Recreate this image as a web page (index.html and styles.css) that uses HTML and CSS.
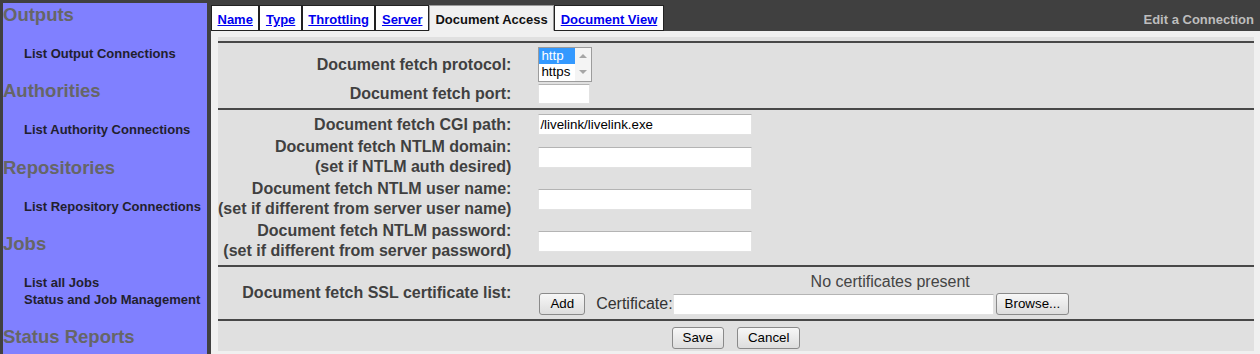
FILE: index.html
```html
<!DOCTYPE html>
<html lang="en">
<head>
<meta charset="utf-8">
<title>Edit a Connection</title>
<link rel="stylesheet" href="styles.css">
</head>
<body>
<div class="page">
  <nav class="nav">
    <div class="nav-section">
      <div class="nav-head">Outputs</div>
      <ul class="nav-links"><li><a href="#">List Output Connections</a></li></ul>
    </div>
    <div class="nav-section">
      <div class="nav-head">Authorities</div>
      <ul class="nav-links"><li><a href="#">List Authority Connections</a></li></ul>
    </div>
    <div class="nav-section">
      <div class="nav-head">Repositories</div>
      <ul class="nav-links"><li><a href="#">List Repository Connections</a></li></ul>
    </div>
    <div class="nav-section">
      <div class="nav-head">Jobs</div>
      <ul class="nav-links"><li><a href="#">List all Jobs</a></li><li><a href="#">Status and Job Management</a></li></ul>
    </div>
    <div class="nav-section">
      <div class="nav-head">Status Reports</div>
    </div>
  </nav>
  <main class="main">
    <div class="header">
      <div class="tabs">
        <a class="tab" href="#">Name</a>
        <a class="tab" href="#">Type</a>
        <a class="tab" href="#">Throttling</a>
        <a class="tab" href="#">Server</a>
        <span class="tab tab-active">Document Access</span>
        <a class="tab" href="#">Document View</a>
      </div>
      <div class="title">Edit a Connection</div>
    </div>
    <div class="content">
      <div class="panel">
        <div class="form">
          <div class="rule rule-first"></div>

          <div class="label">Document fetch protocol:</div>
          <div class="value">
            <div class="listbox">
              <div class="options">
                <div class="opt opt-sel">http</div>
                <div class="opt">https</div>
              </div>
              <div class="lb-scroll"><span class="arr arr-up"></span><span class="arr arr-down"></span></div>
            </div>
          </div>

          <div class="label">Document fetch port:</div>
          <div class="value"><span class="input input-port"></span></div>

          <div class="rule"></div>

          <div class="label">Document fetch CGI path:</div>
          <div class="value"><span class="input input-text">/livelink/livelink.exe</span></div>

          <div class="label">Document fetch NTLM domain:<br>(set if NTLM auth desired)</div>
          <div class="value"><span class="input input-text"></span></div>

          <div class="label">Document fetch NTLM user name:<br>(set if different from server user name)</div>
          <div class="value"><span class="input input-text"></span></div>

          <div class="label">Document fetch NTLM password:<br>(set if different from server password)</div>
          <div class="value"><span class="input input-text"></span></div>

          <div class="rule"></div>

          <div class="label">Document fetch SSL certificate list:</div>
          <div class="value value-ssl">
            <div class="nocerts">No certificates present</div>
            <div class="addrow">
              <span class="btn btn-add">Add</span>
              <span class="cert-label">Certificate:</span>
              <span class="input input-file"></span>
              <span class="btn btn-browse">Browse...</span>
            </div>
          </div>

          <div class="rule"></div>

          <div class="actions">
            <span class="btn">Save</span>
            <span class="btn">Cancel</span>
          </div>
        </div>
      </div>
    </div>
  </main>
</div>
</body>
</html>
```

FILE: styles.css
```css
* { box-sizing: border-box; }
html, body { margin: 0; padding: 0; }
body {
  background: #404040;
  font-family: "Liberation Sans", Arial, sans-serif;
  height: 354px;
  overflow: hidden;
}
.page {
  display: flex;
  gap: 4px;
  padding-left: 3px;
  min-height: 354px;
}

/* navigation */
.nav {
  width: 204px;
  flex: none;
  margin-top: 3px;
  background: #8080ff;
}
.nav-head {
  font-size: 18.5px;
  line-height: 23px;
  font-weight: bold;
  color: #666666;
}
.nav-links {
  list-style: none;
  margin: 19px 0 17.3px;
  padding: 0 0 0 21px;
}
.nav-links li {
  line-height: 17px;
  font-size: 13px;
  font-weight: bold;
  white-space: nowrap;
}
.nav-links a {
  color: #22202e;
  text-decoration: none;
}

/* main */
.main {
  flex: 1;
  display: flex;
  flex-direction: column;
  min-width: 0;
}
.header {
  background: #404040;
  display: flex;
  justify-content: space-between;
  align-items: flex-end;
  padding-top: 5px;
}
.tabs { display: flex; }
.tab {
  display: block;
  border: 1px solid #222222;
  padding: 3px 5.5px 0;
  line-height: 21px;
  font-size: 13px;
  font-weight: bold;
  background: #ffffff;
  color: #0000ee;
  text-decoration: underline;
  white-space: nowrap;
}
.tab-active {
  background: #f0f0f0;
  border-color: #9a9a9a;
  border-bottom-color: #f0f0f0;
  color: #111111;
  text-decoration: none;
}
.title {
  color: #bdbdbd;
  font-size: 13px;
  font-weight: bold;
  line-height: 21px;
  padding: 0 6px 1px 0;
}

.content {
  flex: 1;
  background: #f0f0f0;
  padding: 6px 6px 3px 7px;
}
.panel {
  background: #e0e0e0;
  padding-top: 4px;
}
.form {
  display: grid;
  grid-template-columns: max-content 1fr;
  column-gap: 27px;
  align-items: center;
}
.rule {
  grid-column: 1 / -1;
  height: 2px;
  background: #484848;
  margin: 3px 0;
}
.rule-first { margin-top: 0; }
.label {
  text-align: right;
  font-size: 16px;
  line-height: 20px;
  font-weight: bold;
  color: #404040;
  padding: 1px 0;
  white-space: nowrap;
}
.value {
  display: flex;
  align-items: center;
  padding: 1px 0;
}

/* listbox */
.listbox {
  display: flex;
  width: 54px;
  height: 35px;
  border: 1px solid #9c9c9c;
  background: #ffffff;
}
.options { width: 36px; }
.opt {
  height: 16px;
  line-height: 16px;
  font-size: 13.33px;
  padding-left: 2px;
  color: #000000;
}
.opt-sel { background: #3399ff; color: #ffffff; }
.lb-scroll {
  width: 16px;
  background: #f4f4f4;
  display: flex;
  flex-direction: column;
  justify-content: space-between;
  align-items: center;
  padding: 6px 0 7px;
}
.arr {
  width: 0;
  height: 0;
  border-left: 4px solid transparent;
  border-right: 4px solid transparent;
}
.arr-up { border-bottom: 4px solid #a6a6a6; }
.arr-down { border-top: 4px solid #a6a6a6; }

/* inputs */
.input {
  display: block;
  background: #ffffff;
  border: 1px solid #e2e2e2;
  border-top-color: #b4b4b4;
  font-size: 13.33px;
  line-height: 19px;
  padding: 0 1px;
  color: #000000;
  white-space: nowrap;
  overflow: hidden;
}
.input-port { width: 52px; height: 20px; }
.input-text { width: 214px; height: 21px; }
.input-file { width: 321px; height: 21px; }

/* ssl */
.value-ssl {
  flex-direction: column;
  align-items: stretch;
  padding: 2px 0 1px;
}
.nocerts {
  text-align: center;
  font-size: 16px;
  line-height: 20px;
  color: #444444;
  padding-right: 12px;
}
.addrow {
  display: flex;
  align-items: center;
  height: 23px;
  padding-top: 1px;
}
.cert-label {
  font-size: 16px;
  color: #333333;
  margin-left: 11px;
}
.btn {
  display: inline-block;
  height: 22px;
  line-height: 20px;
  padding: 0 10px;
  border: 1px solid #8a8a8a;
  border-radius: 3px;
  background: linear-gradient(#f7f7f7, #dddddd);
  font-size: 13.33px;
  color: #000000;
  white-space: nowrap;
}
.btn-add { margin-left: 1px; }
.btn-browse { margin-left: 2px; padding: 0 8px; }

.actions {
  grid-column: 1 / -1;
  display: flex;
  justify-content: center;
  gap: 13px;
  padding: 3px 0 2px;
}
```
